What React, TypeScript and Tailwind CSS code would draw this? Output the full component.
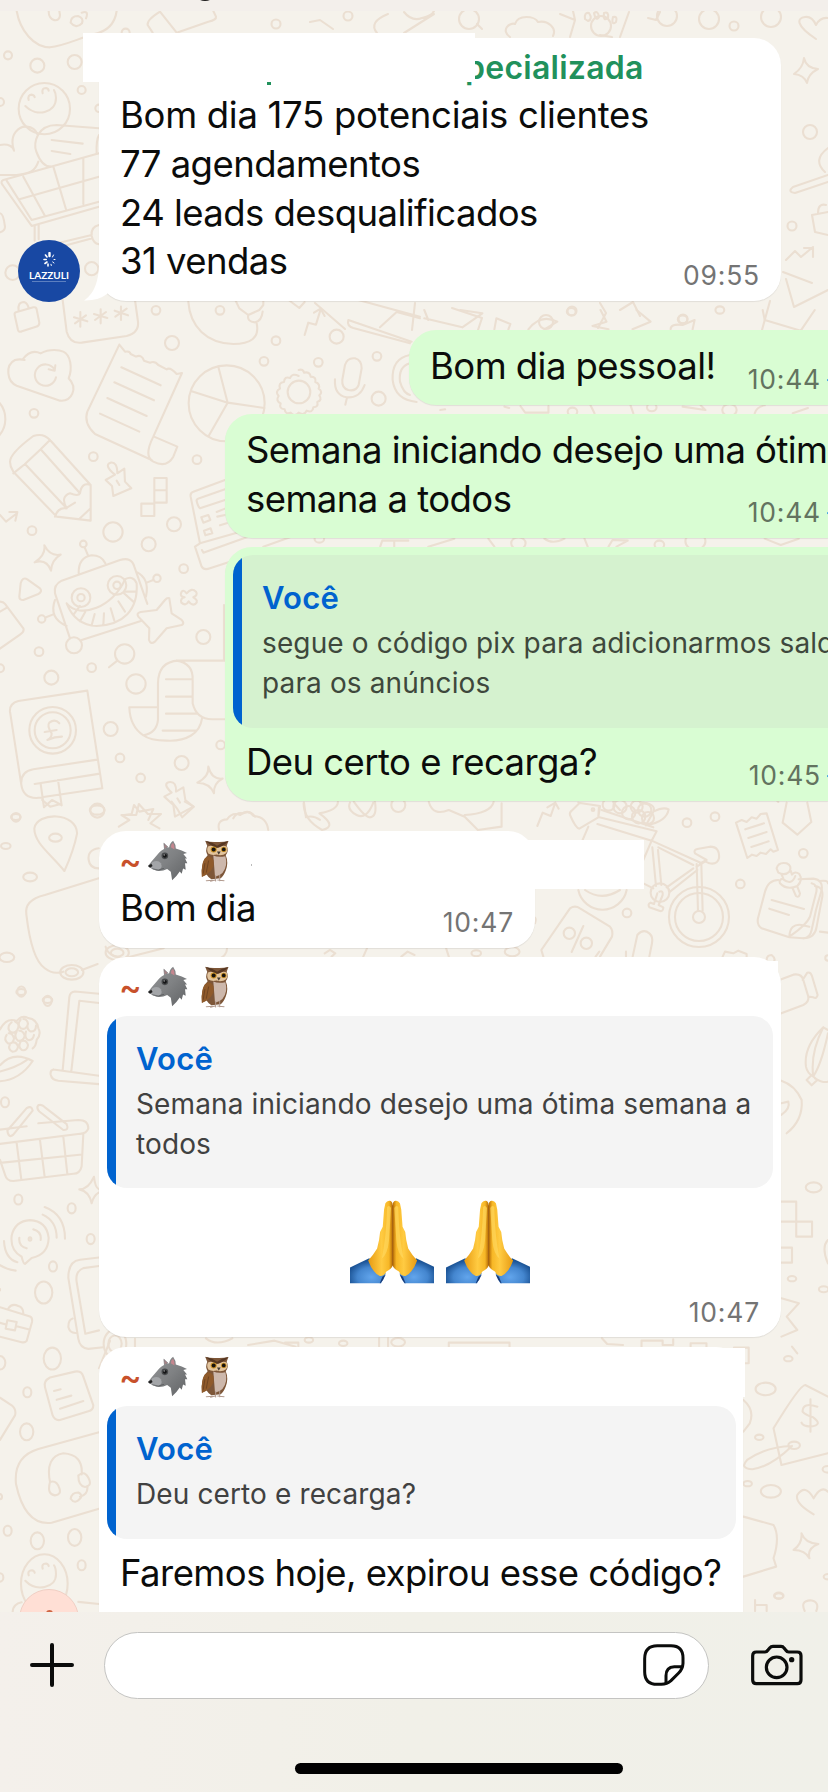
import React from 'react';
import clsx from 'clsx';

type Dot = [number, number, number];

// Wallpaper line art, grouped by region. Each region keeps its own local units.
const doodles: { transform: string; d: string[]; dots: Dot[] }[] = [
  {
    transform: 'scale(0.3333)',
    d: [
      'M50 33C60 90 100 142 150 142C190 138 230 118 280 103C320 95 345 70 350 33',
      'M146 33C145 65 180 70 180 45L178 33M212 68q0-20 22-20q18 6 12 22q-18 18-34-2M245 38Q268 30 258 55',
      'M458 98L443 75Q440 60 480 35L530 98L625 65Q650 60 648 50L640 33',
      'M76 318C108 352 168 340 168 294Q168 280 162 270M86 300q-4-16 10-16q8 2 8 8M128 280q-4-16 10-16q8 2 8 8',
      'M0 435C25 430 40 440 42 452C25 400 60 378 80 380C100 382 108 392 112 402M0 525H50C90 520 105 515 115 485',
      'M297 385L170 375C110 375 100 430 109 455C120 485 135 500 152 500M155 420L248 431M155 453L211 462M297 405Q288 420 290 462',
      'M297 460L10 540Q0 545 8 555L95 678L297 620M20 542L95 660L297 605M70 530L135 648M160 500L198 628M250 475V612M58 598L297 530',
      'M104 678V722M116 675V718M150 735L275 705M160 746L277 715M297 675Q272 680 275 708Q280 730 297 733',
      'M0 640Q10 640 15 680Q15 692 0 697',
    ],
    dots: [[24, 166, 12], [112, 197, 21], [224, 186, 21], [245, 270, 12], [0, 306, 12], [133, 326, 77], [377, 98, 12], [38, 818, 22], [275, 806, 20], [297, 325, 11]],
  },
  {
    transform: 'scale(1)',
    d: [
      'M377 33Q368 22 388 14M404 12Q412 22 422 18Q432 16 434 11M404 33L434 14M477 24L482 29',
      'M510 37C500 30 510 22 515 24C518 14 535 16 538 22C548 20 557 28 553 36',
      'M570 37L575 20L560 14M573 11L575 20M620 37L629 12M600 35L612 37',
      'M585 19q-1-7 4-6q4 6-1 8zM594 13q4-3 5 4q-3 5-5-4zM604 13q5-2 4 5q-5 4-4-5zM613 17q5-1 3 5q-5 4-3-5z',
      'M816 39C795 25 797 18 805 17Q812 16 816 25Q820 17 828 18M648 18L656 20L660 12',
      'M804 58Q806 68 818 69Q808 74 807 83Q804 75 794 74Q803 68 804 58Z',
      'M828 148Q812 160 825 172M828 175L793 187Q787 192 795 193L828 182M812 215L828 212M812 215L815 232L828 235M818 213q0-10 8-8',
      'M786 260L795 251L801 257L813 247M804 248h9v9M783 272L812 283M786 279L794 307L828 290M770 301L762 330',
      'M315 303L345 329M415 303L412 330M452 308L482 318L478 330M600 303L606 313L598 328M620 310L633 302L640 316M310 22L320 20L333 29',
    ],
    dots: [[276, 24, 4.5], [348, 16, 4.5], [469, 19, 10], [601, 26, 10], [667, 16, 10], [709, 19, 10], [734, 26, 4.5], [771, 17, 10], [810, 132, 7], [792, 226, 4.5], [572, 311, 4.5], [683, 319, 4.5], [546, 322, 7]],
  },
  {
    transform: 'translate(0 300) scale(0.3333)',
    d: [
      'M44 45Q42 38 50 36L100 22Q108 20 110 28L118 68Q118 78 108 80L66 94Q56 98 54 90ZM56 32Q52 6 72 6Q84 10 86 26',
      'M188 0L200 95Q210 132 245 128L380 108Q418 98 414 65L405 0',
      'M241 36V80M222 52L262 64M225 70L258 46M302 28V70M282 42L322 54M285 60L318 36M363 20V60M344 32L384 46M346 50L380 26',
      'M565 5C570 80 620 130 700 132C750 132 780 115 770 70M706 0L718 25L745 45L778 30L790 15V0M745 45Q740 65 765 67Q785 64 788 35',
      'M914 105L925 68L948 74L962 28M942 38L962 26L974 48M1045 60L1235 125M1045 60Q1040 78 1060 84L1230 130M1140 82L1190 36L1260 55M1075 0L1260 50M866 0L898 24L914 6',
      'M68 178C85 155 105 152 122 160C150 145 180 150 190 155C212 165 218 205 206 235C235 265 215 305 180 302L50 257C20 245 15 195 45 180Q60 176 74 180',
      'M163 207A32 32 0 1 0 168 232M166 196L164 212L146 208',
      'M358 134L375 155Q390 152 392 162L408 170Q425 162 432 182L450 188Q465 182 475 195L500 208Q510 200 530 222L546 219L460 410Q430 470 460 485Q500 505 520 470L532 440L462 410M358 134L262 335Q250 370 285 402L455 480',
      'M364 202L482 256M343 247L462 301M322 294L440 348M300 341L418 395',
      'M683 308L655 200M683 308L575 274M683 308L793 324M683 308L626 408',
      'M896 210q14-4 16 8q18-4 20 12q18 0 14 16q16 6 10 20q14 10 2 20q10 14-6 20q4 16-12 16q-2 18-20 10q-8 16-24 6q-12 14-24 0q-16 6-18-10q-18-2-12-18q-16-8-6-22q-12-14 4-22q-6-18 12-20q2-18 18-12q8-16 26-6',
      'M1035 195Q1042 172 1065 175Q1085 180 1085 205L1076 255Q1068 275 1045 270Q1025 265 1027 240ZM1005 238Q1002 285 1040 292Q1080 295 1094 255M1041 293L1036 314M1230 165Q1175 175 1178 240Q1185 300 1250 306M1230 190Q1195 200 1200 245Q1210 280 1230 285',
      'M30 485Q30 460 100 408Q130 398 150 420L272 555V662L170 650L40 515Q30 500 30 485ZM75 492L122 448L150 420M75 492L40 520M75 492L200 625M122 448L240 580M165 650Q175 620 200 625Q180 590 210 580Q235 590 240 580Q245 545 272 555M240 655L272 625M197 625L225 608',
      'M317 540L345 524Q310 495 332 488Q352 485 352 520L373 506L375 545L394 565L340 588L336 558ZM350 542L358 555',
      'M463 534H500V608H463ZM463 571H500M424 611H463V648H424Z',
      'M675 540L580 575Q570 578 572 590L600 730L585 740L605 800Q612 812 630 805L690 785M590 603Q588 598 600 594L675 568M675 600L600 625Q594 620 590 603M604 652L625 645L631 660L610 668ZM650 636L675 626M652 650L675 645M612 692L632 685L637 700L616 706ZM660 676L680 670M600 730L740 690M606 750L610 758L740 712M790 740L870 712',
      'M0 645L18 665L48 642M28 636L52 636L46 662',
      'M133 736Q150 770 182 764Q155 780 153 812Q140 775 104 787Q138 765 133 736ZM62 850Q68 830 82 838L120 865Q128 875 115 882L70 900Q58 900 58 890ZM0 905Q10 905 15 912L70 985Q74 994 60 1004L0 1046M0 935L22 922',
      'M165 880Q160 855 185 842L360 780Q395 770 403 800L442 912M165 880L210 1015M245 1020L425 962M236 820Q235 772 275 766Q305 766 316 790M264 766L254 742M408 815Q450 835 438 890M440 848L460 840M165 900Q145 955 200 978M138 952L158 944',
      'M200 910C240 960 340 920 375 838Q400 825 410 850C415 930 370 975 290 978Q225 975 200 910M220 945L240 918M240 964L256 935M275 976L284 942M310 976L312 940M343 962L332 925M375 935L355 904M400 905L372 880M410 875L376 875',
      'M508 895L515 940L545 960Q555 970 545 975L500 985L465 1025Q452 1035 447 1020L448 985L415 950Q408 940 422 936L470 930L495 900Q502 892 508 895Z',
      'M543 880Q548 865 560 880Q575 862 588 875Q595 885 580 892Q598 902 586 912Q575 918 566 904Q558 920 544 908Q540 895 554 892Q540 890 543 880ZM352 1082L327 1102',
      'M675 1082H535Q475 1085 474 1150V1260Q470 1300 430 1306Q390 1280 388 1222H474M530 1082Q580 1090 578 1140V1210Q590 1260 640 1258H675M430 1306Q450 1322 500 1322C560 1325 600 1300 606 1256M498 1138H578M498 1190H578M498 1241H592M488 1292H590M672 915V1082',
      'M30 1235Q28 1210 55 1203L262 1172L307 1465L110 1494Q70 1495 64 1455ZM64 1455Q60 1415 100 1408L292 1379M104 1452L300 1421M122 1452L132 1522L156 1500L185 1516L174 1440',
      'M178 1270Q165 1255 148 1268Q140 1278 155 1300Q155 1315 142 1320Q165 1310 186 1310M134 1296L170 1290',
      'M625 1400Q635 1440 668 1436Q640 1450 642 1480Q630 1450 592 1448Q628 1430 625 1400ZM493 1490L515 1478Q485 1450 510 1446Q530 1445 528 1475L550 1462L556 1500L580 1520L525 1550L520 1515ZM532 1495L540 1508',
      'M372 1545L395 1542L402 1515L418 1535L460 1527L445 1560M912 1508L918 1552Q940 1545 960 1560M1050 1508Q1040 1530 1070 1545Q1100 1560 1120 1508',
      'M700 1555Q710 1535 730 1540Q750 1530 765 1550',
    ],
    dots: [[468, 31, 13], [660, 31, 13], [516, 129, 21], [828, 122, 13], [792, 184, 13], [955, 187, 13], [1010, 110, 21], [1131, 169, 13], [1136, 296, 21], [102, 340, 13], [680, 310, 114], [897, 276, 34], [280, 470, 13], [591, 479, 13], [96, 692, 13], [339, 696, 29], [522, 673, 21], [446, 733, 21], [250, 732, 10], [551, 806, 13], [471, 835, 11], [125, 957, 11], [222, 1036, 24], [243, 893, 28], [351, 856, 28], [243, 893, 11], [351, 856, 11], [374, 1062, 29], [610, 1011, 21], [117, 1055, 13], [275, 1103, 13], [154, 1133, 21], [408, 1152, 29], [158, 1291, 70], [158, 1291, 54], [332, 1287, 21], [662, 1335, 13], [360, 1374, 13], [545, 1389, 21], [422, 1434, 13], [292, 1532, 21], [48, 1552, 13], [0, 1105, 12], [-60, 357, 76], [1195, 1515, 21]],
  },
  {
    transform: 'translate(200 310) scale(0.4005 0.3333)',
    d: [
      'M560 0L570 30M650 0L705 10L655 52L560 25M735 58L740 25L775 42L770 58M820 58Q850 10 892 35L860 58M980 48L1015 35L1000 0M980 48L1020 58M1090 0L1125 35L1080 58M1175 58Q1175 40 1205 45L1235 30L1230 58M1405 0L1410 30L1500 62L1535 0',
      'M800 288L812 308L870 308V288M975 286L985 310M1075 286L1082 310M1205 290L1262 300L1250 286M1385 310Q1390 290 1410 286M1480 310L1518 294',
      'M450 710L455 692H520M485 710V695M570 710L635 686M720 686L735 710M860 686Q880 705 910 686M960 686L968 710M1020 710L1030 690L1068 692L1040 710M1410 686L1450 705L1495 686',
      'M600 300L612 298M760 290L772 294',
    ],
    dots: [[927, 5, 11], [1298, 0, 11], [1128, 292, 12], [1322, 300, 18], [930, 305, 12], [298, 686, 12], [795, 700, 18], [1147, 704, 12], [1237, 694, 25], [1205, 28, 12]],
  },
  {
    transform: 'translate(520 800) scale(0.3333)',
    d: [
      'M52 78L68 38L92 48L106 8M82 22L106 8L116 26',
      'M175 8L240 18L235 52L178 86Q168 86 150 45Q148 38 155 32L178 10M237 18L235 50M238 52L410 94L395 122L232 72M205 80L187 122M245 30L400 82M280 8L300 30M360 8Q410 10 400 35Q430 20 446 28Q440 65 378 76M400 35L378 76',
      'M415 142L520 195M395 122L545 190M397 142L408 258M414 150L424 255M520 205L440 262M532 210L450 275M530 192L534 332M544 192L548 332M395 122L370 180M370 250L400 265',
      'M540 190L560 180L525 160Q520 150 532 147L570 140Q600 140 597 175Q592 195 568 190L556 184L530 200',
      'M418 275Q430 270 428 285L416 315L430 322Q430 335 420 333L388 322Q382 312 392 308L402 312L412 280M175 270A74 74 0 0 0 320 270M195 270Q245 305 300 270',
      'M648 68L665 60L680 66L695 52L710 56L722 42L740 40L774 150L760 155L752 148L738 162L722 158L710 168L696 164L682 174ZM676 88L732 70M685 114L740 96M694 141L746 124',
      'M800 8L788 68L832 104L874 66L862 8M836 238L880 236Q910 240 905 270L888 330L875 390Q870 415 850 415L808 412L725 385Q710 375 714 355L735 275Q745 240 775 240',
      'M875 250Q895 255 888 280L870 350Q860 375 808 410Q810 370 845 375L868 380M885 258Q915 262 905 300L890 380Q885 415 850 415M900 243Q924 240 924 250M900 395L924 398M755 300L852 327M748 326L807 345',
      'M770 205Q775 185 800 190Q818 198 808 215Q795 228 775 218ZM784 222L790 235Q775 240 780 250Q800 272 832 258Q850 240 838 222Q825 212 816 224L812 212M790 238Q815 258 826 228M818 265L828 288Q838 295 840 280L832 260',
      'M70 470L64 450L150 325Q165 315 180 325L270 380Q280 390 276 410L240 470M190 378L155 456M338 470L352 405Q370 385 388 400Q400 410 396 430L388 470M318 455V470',
      'M608 470L615 455L640 460L655 452L680 462V470M740 480Q740 465 755 465Q768 475 762 485',
      'M784 538L820 524Q845 520 850 540L865 590Q868 605 850 615L784 640M848 540L862 518Q872 515 876 528L893 585Q890 598 880 592L865 590',
      'M910 682Q850 740 858 800Q862 820 880 830Q870 760 910 682L924 690M882 826Q905 790 924 700M885 835Q910 850 924 845M875 825L860 840L875 856L892 840Z',
      'M784 842Q825 855 845 900Q850 960 800 1000M784 910L805 905Q812 925 784 945',
      'M770 0L775 6M0 370H45Q50 355 44 352',
    ],
    dots: [[501, 68, 13], [585, 50, 13], [219, 29, 4], [850, 160, 13], [661, 252, 13], [321, 339, 13], [148, 400, 17], [199, 430, 17], [537, 351, 90], [537, 351, 72], [537, 351, 18], [420, 278, 28], [266, 14, 18], [300, 20, 20], [326, 38, 20], [350, 20, 18], [374, 30, 20], [356, 50, 20], [384, 54, 18], [924, 474, 8]],
  },
  {
    transform: 'translate(0 800) scale(0.528 0.3333)',
    d: [
      'M122 213C95 160 65 130 65 85C70 35 145 35 146 100Q140 150 122 213ZM225 80L245 60L230 45L258 45L263 12L280 42L305 42L285 70L302 85M325 5L335 25L345 52L367 20L350 5M415 90Q410 60 430 58Q440 35 455 45Q470 25 480 48Q505 50 508 90M80 0L95 20L115 12',
      'M187 235L85 285Q45 300 50 345Q60 480 85 505Q100 525 120 515M155 510L185 492M187 145Q165 150 168 180Q170 205 187 205M200 440Q205 470 235 475L310 445M430 445Q430 470 410 480',
      'M575 10Q575 60 610 90Q640 80 605 40Q640 30 640 5M670 5Q690 50 700 52Q715 50 710 5M812 5Q820 50 850 30L880 50L905 90L950 80V10M880 45Q930 40 935 5',
      'M615 460L625 450L635 460L628 470M688 470L695 445M760 470L772 455L785 465M845 445L850 470M1128 470L1135 455',
    ],
    dots: [[30, 51, 9], [184, 30, 14], [11, 138, 9], [105, 113, 12], [57, 231, 13], [13, 472, 14], [136, 517, 22], [136, 517, 12], [40, 576, 9], [90, 600, 9], [222, 458, 22], [222, 458, 12], [902, 460, 9], [970, 455, 14]],
  },
  {
    transform: 'translate(0 960) scale(0.3333 0.4209)',
    d: [
      'M297 80L225 75Q210 76 208 88L188 262M297 102L238 97L214 264M160 260L297 275M160 260Q150 262 152 272Q155 285 175 287L297 295',
      'M0 165Q20 135 50 145Q65 130 85 138Q110 140 115 162Q125 175 110 190Q108 205 98 210M0 250Q40 215 98 240Q60 285 0 288M0 265Q50 255 80 238',
      'M35 148Q20 158 28 168Q40 178 52 166Q62 152 45 146M62 142Q50 152 62 162Q78 168 84 152Q82 140 70 140M84 150Q78 164 92 170Q108 170 108 156M20 178Q10 190 24 198Q40 200 42 186Q38 174 26 174M50 170Q40 182 54 192Q70 194 74 180Q70 168 58 168M78 170Q72 184 84 190Q98 192 102 178M30 200Q22 212 38 218Q52 218 54 206Q50 194 38 196M62 194Q52 206 66 214Q82 216 84 202Q80 190 68 192',
      'M0 403L80 395M115 388L235 380Q265 380 265 400Q260 412 240 413L0 437M250 413L245 490Q240 508 220 508L40 525Q20 525 15 510L0 475M0 482L246 462M50 435L64 522M120 428L134 515M190 420L202 508',
      'M22 405L80 352Q95 345 98 358L40 415Q25 425 22 405M115 345Q125 342 135 350L200 390Q208 405 190 404L118 360Q108 352 115 345',
      'M282 515Q285 540 297 545M282 515Q265 545 238 545Q268 550 275 578Q280 560 297 552',
      'M65 705Q30 690 35 655Q45 620 90 618Q140 620 146 660Q145 700 95 708L75 722Q70 722 65 705ZM100 640Q125 645 122 665M80 685Q55 680 58 660M128 605Q170 620 170 660M134 587Q195 605 195 662M12 668Q15 710 52 718M0 725Q20 735 47 738',
      'M297 707L240 712Q205 715 205 755L235 900Q240 922 265 924L310 920M297 727L250 732Q225 740 230 765L256 888L297 880M218 852Q205 855 205 872Q210 888 230 886',
      'M0 825L90 847Q98 850 96 860L80 905Q75 910 65 908L0 895M25 828Q35 815 55 822Q70 825 70 840M0 862L18 866M50 870L88 878M22 856L50 860L45 880L17 876Z',
      'M135 1015Q130 1000 150 992L225 978Q245 975 250 990L280 1058Q280 1070 265 1072L180 1093Q165 1095 158 1082ZM162 1024L182 1020M170 1045L214 1035M180 1066L250 1048',
      'M0 1040L35 1058Q50 1068 45 1082L0 1140',
      'M297 1122L115 1162Q40 1180 48 1245Q75 1345 155 1337L297 1304M150 1240Q135 1180 190 1172Q250 1175 245 1222M150 1240Q170 1235 178 1255Q185 1270 165 1272Q140 1270 150 1240M235 1225Q255 1210 268 1235Q275 1250 255 1252Q235 1250 235 1225M262 1250Q265 1270 240 1275M212 1280Q215 1265 235 1265Q248 1270 242 1278Q225 1295 212 1280',
      'M76 1475C108 1502 168 1492 168 1460Q168 1445 162 1438M86 1462q-4-12 10-12q8 2 8 6M128 1446q-4-12 10-12q8 2 8 6M38 1548Q40 1530 65 1526M235 1525L297 1530',
      'M0 785v-3M330 905L297 970M405 900V920',
    ],
    dots: [[64, 75, 12], [143, 97, 12], [15, 338, 12], [55, 569, 12], [215, 590, 12], [272, 663, 12], [90, 663, 4], [159, 728, 12], [131, 790, 26], [157, 947, 26], [0, 957, 16], [82, 1027, 12], [80, 1121, 20], [23, 1356, 12], [112, 1380, 20], [224, 1372, 20], [245, 1438, 12], [133, 1482, 70], [0, 1275, 6], [0, 1467, 10], [345, 912, 34], [345, 912, 20]],
  },
  {
    transform: 'translate(0 1180) scale(0.528 0.3333)',
    d: [
      'M1480 65H1508V125H1480M1508 125H1538V170H1508V125M1480 203H1500V248H1480M1480 355L1513 370L1490 410L1510 450L1480 470M1568 180Q1555 200 1568 250',
      'M1525 615L1568 650M1525 615Q1515 615 1465 745L1480 855L1568 820M1548 680Q1520 665 1520 695Q1525 705 1540 712Q1560 735 1535 740Q1520 738 1518 728M1535 658V755M1500 798Q1450 800 1415 840Q1400 865 1425 868Q1460 860 1500 798',
      'M1541 1003Q1505 970 1510 945Q1525 910 1541 955Q1555 915 1568 935M1408 1010L1465 1035Q1478 1070 1465 1135L1470 1160L1408 1190',
      'M1518 1060Q1525 1090 1550 1092Q1528 1105 1533 1135Q1525 1110 1503 1110Q1520 1090 1518 1060ZM1430 1260V1282M1408 660Q1430 690 1420 730L1408 755',
      'M470 495L520 482L560 500M540 488H565V500M718 475V500M735 475V500M850 500V488H965V500M1140 475L1150 492L1180 495M1215 500V482H1255V495H1275V478M1308 500V490H1338V500M1390 503H1418V550H1410M390 475Q410 500 440 475',
      'M1430 1530V1545M1500 500L1510 520',
    ],
    dots: [[1541, 22, 15], [1500, 296, 8], [1560, 328, 9], [1450, 627, 19], [1493, 536, 8], [1438, 772, 8], [1504, 796, 11], [1460, 934, 19], [1416, 911, 8], [1475, 1248, 8], [1568, 868, 10], [650, 490, 8], [754, 487, 13], [585, 480, 8]],
  },
  {
    transform: 'translate(0 1560) scale(0.528 0.3333)',
    d: ['M1430 153V135H1452V153M1524 153Q1515 122 1535 121Q1553 125 1546 153'],
    dots: [[1568, 50, 8], [1475, 107, 9]],
  },
];

function Wallpaper() {
  return (
    <svg
      className="absolute inset-0 h-[1612px] w-[828px]"
      viewBox="0 0 828 1612"
      fill="none"
      stroke="#ebdfd2"
      strokeWidth="2.1"
      strokeLinecap="round"
      strokeLinejoin="round"
    >
      {doodles.map((group, index) => (
        <g key={index} transform={group.transform}>
          {group.d.map((d) => (
            <path key={d} d={d} vectorEffect="non-scaling-stroke" />
          ))}
          {group.dots.map(([cx, cy, r], i) => (
            <circle key={i} cx={cx} cy={cy} r={r} vectorEffect="non-scaling-stroke" />
          ))}
        </g>
      ))}
    </svg>
  );
}

function Wolf() {
  return (
    <svg className="h-[41px] w-[41px]" viewBox="172 58 122 124">
      <defs>
        <linearGradient id="wolf" x1="0" y1="0" x2="1" y2="1">
          <stop offset="0" stopColor="#929496" />
          <stop offset="0.5" stopColor="#808284" />
          <stop offset="1" stopColor="#606264" />
        </linearGradient>
      </defs>
      <path d="M224 85L222 68L234 79Z" fill="#a98488" stroke="#6f7173" strokeWidth="2" />
      <path d="M208 96Q222 82 238 80Q240 66 250 60Q259 72 258 84L276 90L292 97L281 100L292 114L286 114L293 128L286 128L288 148L280 144L276 160L270 153Q262 166 247 180L243 154L232 146Q216 154 200 151L184 144L174 137L184 124Z" fill="url(#wolf)" />
      <path d="M243 80Q243 70 250 66Q256 76 254 87Z" fill="#c4868e" />
      <path d="M187 125Q204 117 213 128Q220 143 204 150Q191 150 181 139Z" fill="#a3a5a8" />
      <path d="M174 137L184 130L188 137L180 142Z" fill="#222" />
      <path d="M187 145Q205 153 222 144" stroke="#4b4d4f" strokeWidth="2" fill="none" />
      <circle cx="225" cy="106" r="10" fill="#47494b" />
      <circle cx="225" cy="106" r="6" fill="#141516" />
      <circle cx="223" cy="103" r="1.8" fill="#ddd" />
    </svg>
  );
}

function Owl() {
  return (
    <svg className="h-[43px] w-[30px]" viewBox="332 56 88 128">
      <path d="M347 62Q362 66 381 65Q400 66 416 62L411 75Q418 92 408 104Q417 125 408 150Q401 168 393 173L365 176Q356 171 351 162L337 168Q334 149 340 128Q345 112 354 104Q346 91 353 77Z" fill="#7d5638" />
      <path d="M355 78Q368 72 382 82Q396 72 411 78Q417 97 401 103Q389 106 381 102Q367 106 356 99Q350 89 355 78Z" fill="#e2c49d" />
      <path d="M347 61Q370 66 382 76Q396 66 416 62Q408 73 386 82H378Q360 73 347 61Z" fill="#553622" />
      <path d="M371 105Q385 112 407 107Q415 137 398 157Q389 166 376 168Z" fill="#cdb8ac" />
      <path d="M357 107Q376 111 371 138Q363 158 337 169Q334 127 346 113Z" fill="#8f5a2b" />
      <path d="M346 128L341 159M357 120L350 156" stroke="#704522" strokeWidth="3" />
      <circle cx="372" cy="87" r="9" fill="#c99026" />
      <circle cx="402" cy="87" r="8" fill="#c99026" />
      <circle cx="372" cy="87" r="6" fill="#171411" />
      <circle cx="402" cy="87" r="5.5" fill="#171411" />
      <path d="M382 93H393L387 103Z" fill="#403a35" />
      <path d="M350 180L378 178M384 178L403 180M378 165V181M390 164V180M363 182L378 177" stroke="#b29b8f" strokeWidth="3" strokeLinecap="round" />
    </svg>
  );
}

function PrayingHands() {
  return (
    <svg className="h-[84px] w-[84px]" viewBox="60 58 254 254">
      <defs>
        <linearGradient id="skinLeft" x1="0" y1="0" x2="1" y2="0">
          <stop offset="0" stopColor="#e79a12" />
          <stop offset="0.55" stopColor="#ffcb42" />
          <stop offset="0.85" stopColor="#f7b726" />
          <stop offset="1" stopColor="#b56a05" />
        </linearGradient>
        <radialGradient id="sleeve" cx="0.6" cy="0.75" r="0.65">
          <stop offset="0" stopColor="#62a5ec" />
          <stop offset="0.6" stopColor="#4486cf" />
          <stop offset="1" stopColor="#1c5496" />
        </radialGradient>
      </defs>
      {['', 'translate(378 0) scale(-1 1)'].map((transform) => (
        <g key={transform} transform={transform || undefined}>
          <path d="M60 262L118 234L168 280L154 310H60Z" fill="url(#sleeve)" />
          <path d="M150 310L158 290L168 283L160 300L152 310Z" fill="#173a78" />
          <path d="M167 68Q172 59 180 60Q188 61 189 72V257Q184 268 170 274Q163 289 150 288Q127 276 115 241Q131 224 142 205Q149 180 151 155L159 139L163 87Z" fill="url(#skinLeft)" />
          <path d="M172 80Q178 72 184 82L178 180Q174 222 156 236Q170 170 172 80Z" fill="#ffd75d" opacity="0.7" />
        </g>
      ))}
      <path d="M189 74V256" stroke="#a35c09" strokeWidth="3" />
    </svg>
  );
}

function Time({ children, className }: { children: string; className?: string }) {
  return (
    <span className={clsx('shrink-0 text-[26.5px] leading-[32px] tracking-[0.8px]', className ?? 'text-[#747474]')}>
      {children}
    </span>
  );
}

// time plus the read receipt that runs past the screen edge
function SentTime({ children }: { children: string }) {
  return (
    <span className="absolute right-[-25px] bottom-[10px] flex items-center gap-[6px]">
      <Time className="text-[#63735f]">{children}</Time>
      <svg className="mt-[2px] h-[20px] w-[26px]" viewBox="0 0 26 20" fill="none" stroke="#1687e8" strokeWidth="3">
        <path d="M1 9L7 16L18 3M11 14L13 16L25 3" />
      </svg>
    </span>
  );
}

function Sender() {
  return (
    <div className="flex h-[43px] items-center">
      <span className="-ml-px w-[28px] text-[34px] leading-[43px] font-medium text-[#c8512b]">~</span>
      <Wolf />
      <span className="w-[12px]" />
      <Owl />
    </div>
  );
}

function Quote({ lines, className }: { lines: string[]; className: string }) {
  return (
    <div className={clsx('flex overflow-hidden rounded-[20px]', className)}>
      <div className="w-[9px] shrink-0 bg-[#0063cf]" />
      <div className="pt-[22px] pl-[20px]">
        <div className="text-[31px] leading-[42px] font-semibold tracking-[0.3px] text-[#0063cf]">Você</div>
        <div className="mt-[4px] text-[28px] leading-[40px] tracking-[0.12px] whitespace-nowrap">
          {lines.map((line) => (
            <div key={line}>{line}</div>
          ))}
        </div>
      </div>
    </div>
  );
}

const bodyText = 'text-[36.5px] leading-[48.8px] tracking-[-0.55px] whitespace-nowrap text-[#0b0c0b]';
const shadow = 'shadow-[0_1px_1px_rgba(0,0,0,0.08)]';

export default function App() {
  const report = ['Bom dia 175 potenciais clientes', '77 agendamentos', '24 leads desqualificados', '31 vendas'];

  return (
    <div className="relative flex h-[1792px] w-[828px] flex-col overflow-hidden bg-[#f5f2eb] font-['Inter','Liberation_Sans',sans-serif]">
      <Wallpaper />

      {/* Bottom edge of the chat header */}
      <div className="relative h-[11px] shrink-0 overflow-hidden bg-[#f3efeb]">
        <div className="absolute -top-[23px] left-[193px] h-[24px] w-[24px] rounded-full bg-[#1c1a1b]" />
      </div>

      <main className="relative flex h-[1601px] shrink-0 flex-col overflow-hidden">
        <div className="mt-[27px] flex h-[263px] shrink-0 items-end">
          <div className="relative top-[1px] ml-[18px] flex h-[62px] w-[62px] flex-col items-center rounded-full bg-[#1848a3] pt-[12px] text-white">
            <svg className="h-[15px] w-[13px]" viewBox="0 0 13 15" stroke="white" strokeLinecap="round">
              <path d="M6.5 1V4" strokeWidth="2.4" />
              <path d="M2.5 3L4 5M1 7.5H3.2M2 11.5L4 10M5 14V12" strokeWidth="1.6" />
              <path d="M10.5 3L9.5 5M12 7.5H11M11 11L9.7 10M8.3 13.5L8 12.3" strokeWidth="1" />
            </svg>
            <span className="mt-[3px] font-['Lato','Inter',sans-serif] text-[10px] leading-[10px] font-bold">LAZZULI</span>
            <span className="mt-[1px] h-px w-[34px] bg-[#5c7fc0]" />
          </div>
          <div className={clsx('relative ml-[19px] h-[263px] w-[682px] rounded-[27px] bg-white', shadow)}>
            <svg className="absolute bottom-0 -left-[15px] h-[40px] w-[40px]" viewBox="0 0 40 40">
              <path d="M15 0V5C14 25 8 34 0 39.5Q14 40 23 33L30 20V0Z" fill="white" />
            </svg>
            <div className="pt-[9px] pl-[366px] text-[32px] leading-[42px] font-semibold tracking-[0.25px] text-[#21915c]">
              pecializada
            </div>
            <div className="absolute top-[44px] left-[168px] h-[3px] w-[4px] bg-[#21915c]" />
            <div className="absolute -top-[5px] -left-[16px] h-[49px] w-[392px] bg-white" />
            <div className={clsx('relative mt-[2px] pl-[21px]', bodyText)}>
              {report.map((line, index) => (
                <div key={line} className={index === 0 ? 'tracking-[-0.3px]' : undefined}>
                  {line}
                </div>
              ))}
            </div>
            <span className="absolute right-[21px] bottom-[10px] flex">
              <Time>09:55</Time>
            </span>
          </div>
        </div>

        {/* Sent messages */}
        <div className={clsx('relative mt-[29px] ml-[409px] h-[75px] shrink-0 rounded-l-[27px] bg-[#d9fdd3] pt-[12px] pl-[21px]', bodyText, shadow)}>
          Bom dia pessoal!
          <SentTime>10:44</SentTime>
        </div>
        <div className={clsx('relative mt-[9px] ml-[225px] h-[124px] shrink-0 rounded-l-[27px] bg-[#d9fdd3] pt-[12px] pl-[21px]', bodyText, shadow)}>
          Semana iniciando desejo uma ótima
          <br />
          semana a todos
          <SentTime>10:44</SentTime>
        </div>
        <div className={clsx('relative mt-[9px] ml-[225px] h-[254px] shrink-0 rounded-l-[27px] bg-[#d9fdd3] pt-[8px] pl-[8px]', shadow)}>
          <Quote
            lines={['segue o código pix para adicionarmos saldo', 'para os anúncios']}
            className="h-[173px] w-[640px] bg-[#d5f2cf] text-[#3e483c]"
          />
          <div className={clsx('mt-[10px] pl-[13px]', bodyText)}>Deu certo e recarga?</div>
          <SentTime>10:45</SentTime>
        </div>

        {/* Received messages */}
        <div className={clsx('relative mt-[30px] ml-[99px] h-[117px] w-[436px] shrink-0 rounded-[27px] bg-white pt-[8px] pl-[21px]', shadow)}>
          <div className="absolute top-[9px] left-[400px] h-[49px] w-[145px] bg-white" />
          <Sender />
          <div className="absolute top-[33px] left-[152px] h-[2px] w-px bg-[#bbb]" />
          <div className={clsx('mt-[2px]', bodyText)}>Bom dia</div>
          <span className="absolute right-[21px] bottom-[10px] flex">
            <Time>10:47</Time>
          </span>
        </div>

        <div className={clsx('relative mt-[9px] ml-[99px] h-[380px] w-[682px] shrink-0 rounded-[27px] bg-white pt-[8px]', shadow)}>
          <div className="absolute top-[4px] right-[3px] h-[49px] w-[100px] bg-white" />
          <div className="pl-[21px]">
            <Sender />
          </div>
          <Quote
            lines={['Semana iniciando desejo uma ótima semana a', 'todos']}
            className="mt-[8px] ml-[8px] h-[172px] w-[666px] bg-[#f4f4f4] text-[#414141]"
          />
          <div className="mt-[12px] flex justify-center gap-[12px]">
            <PrayingHands />
            <PrayingHands />
          </div>
          <span className="absolute right-[21px] bottom-[9px] flex">
            <Time>10:47</Time>
          </span>
        </div>

        <div className="mt-[10px] flex shrink-0">
          <div className="mt-[242px] ml-[19px] flex h-[60px] w-[60px] justify-center rounded-full border border-[#f0cfc4] bg-[#ffdfd5] pt-[20px]">
            <div className="h-[8px] w-[7px] rounded-full bg-[#cf6543]" />
          </div>
          <div className={clsx('relative ml-[20px] h-[330px] w-[644px] rounded-[27px] bg-white pt-[8px]', shadow)}>
            <div className="absolute top-[1px] -right-[2px] h-[49px] w-[100px] bg-white" />
            <div className="relative pl-[21px]">
              <Sender />
            </div>
            <Quote
              lines={['Deu certo e recarga?']}
              className="mt-[8px] ml-[8px] h-[133px] w-[629px] bg-[#f4f4f4] text-[#414141]"
            />
            <div className={clsx('mt-[10px] pl-[21px]', bodyText)}>Faremos hoje, expirou esse código?</div>
          </div>
        </div>
      </main>

      {/* Composer */}
      <footer className="relative h-[180px] shrink-0 bg-gradient-to-r from-[#f4f0eb] via-[#f1f0e8] to-[#f0f0e9]">
        <div className="flex items-center pt-[20px]">
          <svg className="mb-[2px] ml-[29px] h-[46px] w-[46px]" viewBox="0 0 46 46" stroke="#0b0c0b" strokeWidth="4" strokeLinecap="round">
            <path d="M23 3V43M3 23H43" />
          </svg>
          <div className="ml-[29px] flex h-[67px] w-[605px] items-center justify-end rounded-full border border-[#c4c4c2] bg-white pr-[23px]">
            <svg className="mb-px h-[42px] w-[42px]" viewBox="66 132 126 126" fill="none" stroke="#0b0c0b" strokeWidth="9" strokeLinejoin="round">
              <path d="M109 137H150Q186 137 186 174V190Q185 207 173 219L150 242Q138 253 121 253H109Q71 253 71 215V176Q71 137 109 137Z" />
              <path d="M185 200H160Q135 201 135 227V250" />
            </svg>
          </div>
          <svg className="mb-[2px] ml-[41px] h-[42px] w-[54px]" viewBox="386 131 162 126" fill="none" stroke="#0b0c0b" strokeWidth="9.5" strokeLinejoin="round">
            <path d="M405 155H431Q436 155 440 149L445 143Q449 138 455 138H479Q485 138 488 143L493 149Q497 155 502 155H528Q539 155 539 166V239Q539 250 528 250H405Q394 250 394 239V166Q394 155 405 155Z" />
            <circle cx="466" cy="201" r="31" />
            <circle cx="511" cy="178" r="8" fill="#0b0c0b" stroke="none" />
          </svg>
        </div>
        <div className="mt-[64px] ml-[295px] h-[11px] w-[328px] rounded-full bg-black" />
      </footer>
    </div>
  );
}
